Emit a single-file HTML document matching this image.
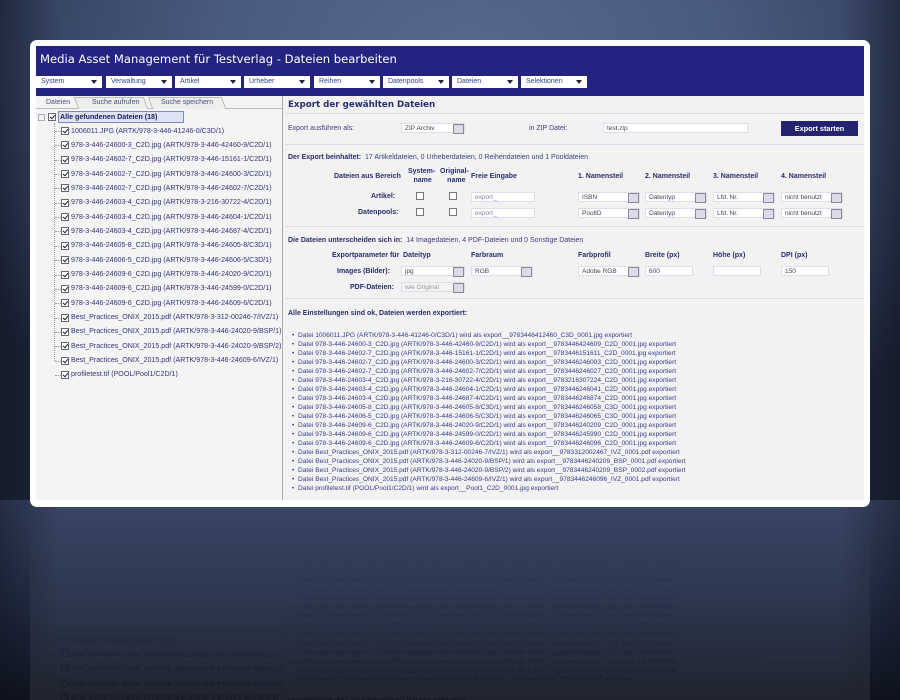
<!DOCTYPE html>
<html><head><meta charset="utf-8"><style>
*{margin:0;padding:0;box-sizing:border-box}
html,body{width:900px;height:700px;overflow:hidden}
body{position:relative;font-family:"Liberation Sans",sans-serif;
background:radial-gradient(ellipse 620px 420px at 470px 60px,#56698f 0%,#4a5b80 40%,#34415f 75%,#1d2538 100%);}
.bot{position:absolute;left:0;top:500px;width:900px;height:200px;background:linear-gradient(#3a4766,#263049 50%,#10141f);}
.side{position:absolute;top:0;height:700px;width:60px}
#scr{position:absolute;left:30px;top:40px;width:840px;height:467px;background:#fff;border-radius:7px;
-webkit-box-reflect:below 0 linear-gradient(to bottom,rgba(0,0,0,0.2),rgba(0,0,0,0.07) 60%,rgba(0,0,0,0) 100%);}
.in{position:absolute;left:6px;top:6px;width:828px;height:454px;background:#f2f2f2;overflow:hidden}
.hd{position:absolute;left:0;top:0;width:828px;height:50px;background:#232380}
.ttl{position:absolute;left:4px;top:6px;color:#fff;font-family:"DejaVu Sans",sans-serif;font-size:11.6px}
.mn{position:absolute;top:30px;height:12px;width:66px;background:#fff;font-size:7px;color:#3a3f8a;padding:2px 0 0 5px}
.mn:after{content:"";position:absolute;right:5px;top:4px;border:3px solid transparent;border-top:4px solid #223;border-bottom:0}
.t{position:absolute;font-size:7px;color:#3c3f80;white-space:nowrap}
.b{font-weight:bold;color:#2a2d6e}
.ln{position:absolute;height:1px;background:#9a9cc0;border-bottom:1px solid #d8d8e6}
.tr{position:absolute;left:0;font-size:7.1px;color:#33357a;white-space:nowrap}
.cb{position:absolute;width:8px;height:8px;border:1px solid #667;background:#fff}
.cb.k:after{content:"";position:absolute;left:2px;top:0px;width:2px;height:4px;border:solid #222;border-width:0 1.3px 1.3px 0;transform:rotate(40deg)}
.sel{position:absolute;height:10px;background:#fff;border:1px solid #dde;font-size:6.5px;color:#445;padding:1px 3px}
.sel:after{content:"";position:absolute;right:0;top:0;width:9px;height:8px;background:#dcdce6;border:1px solid #889}
.inp{position:absolute;height:10px;background:#fff;border:1px solid #dde;font-size:6.5px;color:#445;padding:1px 3px}
.chk{position:absolute;width:8px;height:8px;border:1px solid #777;background:#fff}
.log{position:absolute;left:256px;top:285px;font-size:6.6px;color:#3a3d8a;line-height:9px;white-space:nowrap}
</style></head><body>
<div class="bot"></div>
<div class="side" style="left:0;background:linear-gradient(to right,rgba(10,14,25,.45),transparent)"></div>
<div class="side" style="right:0;background:linear-gradient(to left,rgba(10,14,25,.45),transparent)"></div>
<div id="scr"><div class="in">
<div class="hd">
<div class="ttl">Media Asset Management für Testverlag - Dateien bearbeiten</div>
<div class="mn" style="left:0">System</div>
<div class="mn" style="left:70px">Verwaltung</div>
<div class="mn" style="left:139px">Artikel</div>
<div class="mn" style="left:208px">Urheber</div>
<div class="mn" style="left:278px">Reihen</div>
<div class="mn" style="left:347px">Datenpools</div>
<div class="mn" style="left:416px">Dateien</div>
<div class="mn" style="left:485px">Selektionen</div>
</div>
<div style="position:absolute;left:0;top:51px;width:246px;height:403px;background:#f4f4f4"></div>
<div style="position:absolute;left:246px;top:50px;width:1px;height:404px;background:#aaa"></div>
<div style="position:absolute;left:0;top:62px;width:246px;height:1px;background:#bbb"></div>
<div class="t" style="left:10px;top:53px;color:#4a4d8a">Dateien</div>
<div style="position:absolute;left:40px;top:51px;width:70px;height:12px;border:1px solid #bbb;border-bottom:0;background:#eee;transform:skewX(20deg)"></div>
<div class="t" style="left:56px;top:53px;color:#4a4d8a">Suche aufrufen</div>
<div style="position:absolute;left:114px;top:51px;width:74px;height:12px;border:1px solid #bbb;border-bottom:0;background:#eee;transform:skewX(20deg)"></div>
<div class="t" style="left:125px;top:53px;color:#4a4d8a">Suche speichern</div>
<div style="position:absolute;left:2px;top:68px;width:7px;height:7px;border:1px solid #aab;background:#eef"></div>
<div class="cb k" style="left:12px;top:67px"></div>
<div style="position:absolute;left:22px;top:65px;width:126px;height:12px;border:1px solid #7a8ac8;background:#dde3f5"></div>
<div class="tr b" style="left:24px;top:67px;color:#1a1d5e">Alle gefundenen Dateien (18)</div>
<div style="position:absolute;left:18px;top:77px;width:1px;height:238px;border-left:1px dotted #999"></div>
<div id="tree"></div>
<div class="t" style="left:252px;top:54px;font-size:8.7px;font-weight:bold;color:#2a2d6e;font-family:'DejaVu Sans',sans-serif">Export der gewählten Dateien</div>
<div class="ln" style="left:250px;top:67px;width:578px"></div>
<div class="t" style="left:252px;top:79px">Export ausführen als:</div>
<div class="sel" style="left:365px;top:77px;width:64px">ZIP Archiv</div>
<div class="t" style="left:493px;top:79px">in ZIP Datei:</div>
<div class="inp" style="left:567px;top:77px;width:145px">test.zip</div>
<div style="position:absolute;left:745px;top:75px;width:77px;height:15px;background:#232370;color:#fff;font-size:7.3px;font-weight:bold;text-align:center;padding-top:3px">Export starten</div>
<div class="ln" style="left:250px;top:98px;width:578px"></div>
<div class="t" style="left:252px;top:108px"><span class="b">Der Export beinhaltet:</span>&nbsp; 17 Artikeldateien, 0 Urheberdateien, 0 Reihendateien und 1 Pooldateien</div>
<div class="t b" style="left:298px;top:127px">Dateien aus Bereich</div>
<div class="t b" style="left:372px;top:121px;text-align:center;line-height:9px">System-<br>&nbsp;name</div>
<div class="t b" style="left:404px;top:121px;text-align:center;line-height:9px">Original-<br>&nbsp;&nbsp;name</div>
<div class="t b" style="left:435px;top:127px">Freie Eingabe</div>
<div class="t b" style="left:542px;top:127px">1. Namensteil</div>
<div class="t b" style="left:609px;top:127px">2. Namensteil</div>
<div class="t b" style="left:677px;top:127px">3. Namensteil</div>
<div class="t b" style="left:745px;top:127px">4. Namensteil</div>
<div class="t b" style="left:335px;top:147px">Artikel:</div>
<div class="t b" style="left:322px;top:163px">Datenpools:</div>
<div class="chk" style="left:380px;top:146px"></div><div class="chk" style="left:413px;top:146px"></div>
<div class="chk" style="left:380px;top:162px"></div><div class="chk" style="left:413px;top:162px"></div>
<div class="inp" style="left:435px;top:146px;width:64px;color:#88a">export_</div>
<div class="inp" style="left:435px;top:162px;width:64px;color:#88a">export_</div>
<div class="sel" style="left:542px;top:146px;width:62px">ISBN</div>
<div class="sel" style="left:609px;top:146px;width:62px">Datentyp</div>
<div class="sel" style="left:677px;top:146px;width:62px">Lfd. Nr.</div>
<div class="sel" style="left:745px;top:146px;width:62px">nicht benutzt</div>
<div class="sel" style="left:542px;top:162px;width:62px">PoolID</div>
<div class="sel" style="left:609px;top:162px;width:62px">Datentyp</div>
<div class="sel" style="left:677px;top:162px;width:62px">Lfd. Nr.</div>
<div class="sel" style="left:745px;top:162px;width:62px">nicht benutzt</div>
<div class="ln" style="left:250px;top:180px;width:578px"></div>
<div class="t" style="left:252px;top:191px"><span class="b">Die Dateien unterscheiden sich in:</span>&nbsp; 14 Imagedateien, 4 PDF-Dateien und 0 Sonstige Dateien</div>
<div class="t b" style="left:296px;top:206px">Exportparameter für</div>
<div class="t b" style="left:367px;top:206px">Dateityp</div>
<div class="t b" style="left:435px;top:206px">Farbraum</div>
<div class="t b" style="left:542px;top:206px">Farbprofil</div>
<div class="t b" style="left:609px;top:206px">Breite (px)</div>
<div class="t b" style="left:677px;top:206px">Höhe (px)</div>
<div class="t b" style="left:745px;top:206px">DPI (px)</div>
<div class="t b" style="left:301px;top:222px">Images (Bilder):</div>
<div class="t b" style="left:314px;top:238px">PDF-Dateien:</div>
<div class="sel" style="left:365px;top:220px;width:64px">jpg</div>
<div class="sel" style="left:435px;top:220px;width:62px">RGB</div>
<div class="sel" style="left:542px;top:220px;width:62px">Adobe RGB</div>
<div class="inp" style="left:609px;top:220px;width:48px">600</div>
<div class="inp" style="left:677px;top:220px;width:48px"></div>
<div class="inp" style="left:745px;top:220px;width:48px">150</div>
<div class="sel" style="left:365px;top:236px;width:64px;color:#999;background:#f4f4f4">wie Original</div>
<div class="ln" style="left:250px;top:252px;width:578px"></div>
<div class="t b" style="left:252px;top:264px">Alle Einstellungen sind ok, Dateien werden exportiert:</div>
<div class="log" id="log"></div>
</div></div>
<script>
var f=[["1006011.JPG","ARTK/978-3-446-41246-0/C3D/1","9783446412460_C3D_0001.jpg"],
["978-3-446-24600-3_C2D.jpg","ARTK/978-3-446-42460-9/C2D/1","9783446424609_C2D_0001.jpg"],
["978-3-446-24602-7_C2D.jpg","ARTK/978-3-446-15161-1/C2D/1","9783446151611_C2D_0001.jpg"],
["978-3-446-24602-7_C2D.jpg","ARTK/978-3-446-24600-3/C2D/1","9783446246003_C2D_0001.jpg"],
["978-3-446-24602-7_C2D.jpg","ARTK/978-3-446-24602-7/C2D/1","9783446246027_C2D_0001.jpg"],
["978-3-446-24603-4_C2D.jpg","ARTK/978-3-216-30722-4/C2D/1","9783216307224_C2D_0001.jpg"],
["978-3-446-24603-4_C2D.jpg","ARTK/978-3-446-24604-1/C2D/1","9783446246041_C2D_0001.jpg"],
["978-3-446-24603-4_C2D.jpg","ARTK/978-3-446-24687-4/C2D/1","9783446246874_C2D_0001.jpg"],
["978-3-446-24605-8_C2D.jpg","ARTK/978-3-446-24605-8/C3D/1","9783446246058_C3D_0001.jpg"],
["978-3-446-24606-5_C2D.jpg","ARTK/978-3-446-24606-5/C3D/1","9783446246065_C3D_0001.jpg"],
["978-3-446-24609-6_C2D.jpg","ARTK/978-3-446-24020-9/C2D/1","9783446240209_C2D_0001.jpg"],
["978-3-446-24609-6_C2D.jpg","ARTK/978-3-446-24599-0/C2D/1","9783446245990_C2D_0001.jpg"],
["978-3-446-24609-6_C2D.jpg","ARTK/978-3-446-24609-6/C2D/1","9783446246096_C2D_0001.jpg"],
["Best_Practices_ONIX_2015.pdf","ARTK/978-3-312-00246-7/IVZ/1","9783312002467_IVZ_0001.pdf"],
["Best_Practices_ONIX_2015.pdf","ARTK/978-3-446-24020-9/BSP/1","9783446240209_BSP_0001.pdf"],
["Best_Practices_ONIX_2015.pdf","ARTK/978-3-446-24020-9/BSP/2","9783446240209_BSP_0002.pdf"],
["Best_Practices_ONIX_2015.pdf","ARTK/978-3-446-24609-6/IVZ/1","9783446246096_IVZ_0001.pdf"],
["profiletest.tif","POOL/Pool1/C2D/1","Pool1_C2D_0001.jpg"]];
var h="",l="";
for(var i=0;i<f.length;i++){var y=81+i*14.35;
h+='<div style="position:absolute;left:19px;top:'+(y+4)+'px;width:6px;border-top:1px dotted #999"></div><div class="cb k" style="left:25px;top:'+y+'px"></div><div class="tr" style="left:35px;top:'+(y-0.5)+'px">'+f[i][0]+' ('+f[i][1]+')</div>';
l+='&bull;&nbsp; Datei '+f[i][0]+' ('+f[i][1]+') wird als export__'+f[i][2]+' exportiert<br>';}
document.getElementById("tree").outerHTML=h;document.getElementById("log").innerHTML=l;
</script>
</body></html>
